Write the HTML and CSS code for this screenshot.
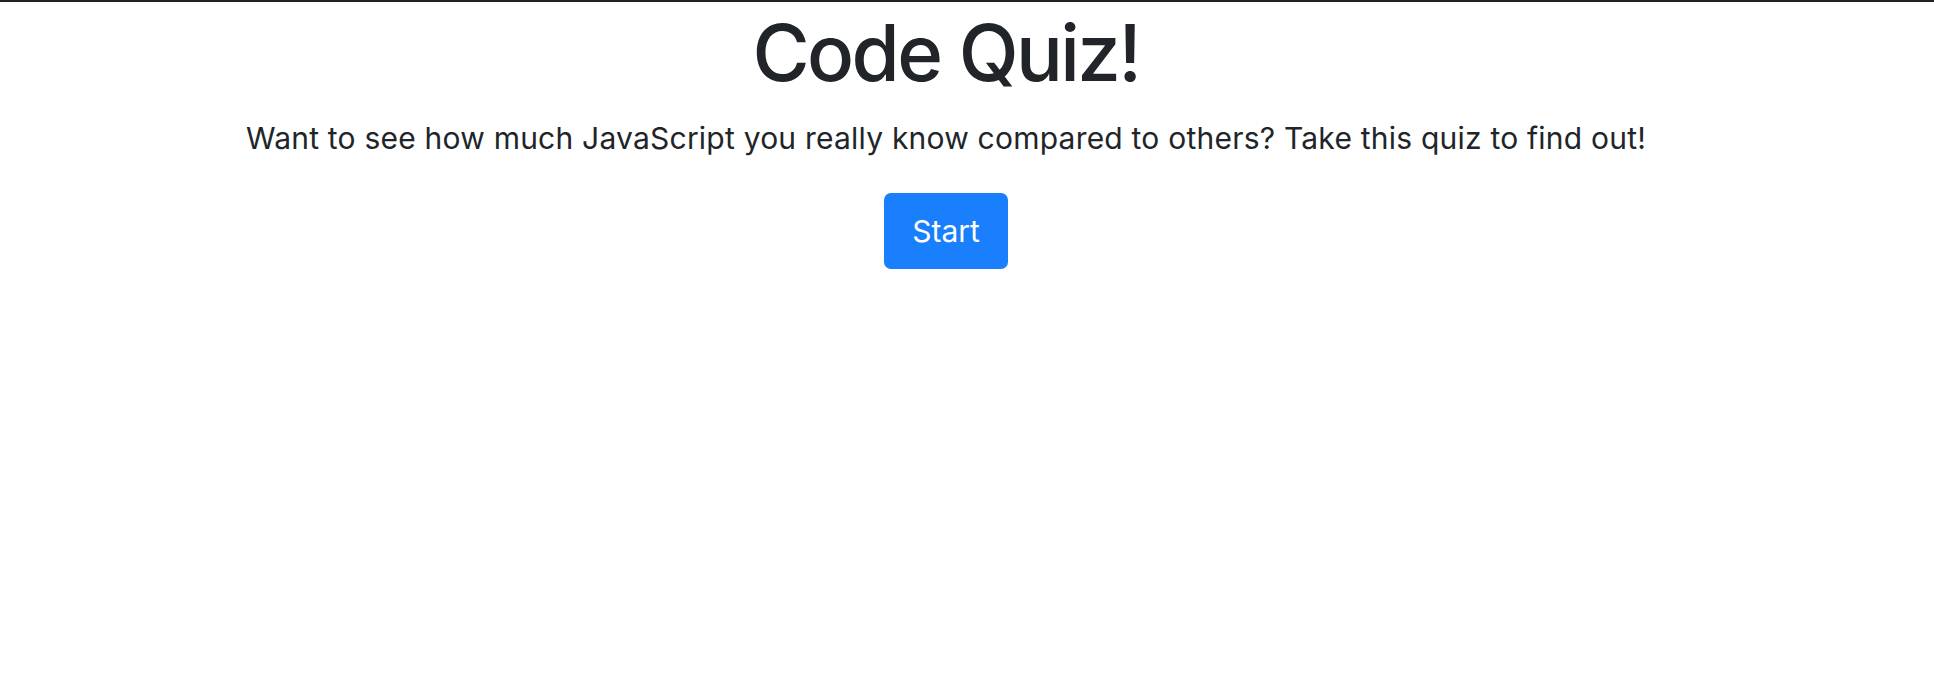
FILE: index.html
```html
<!DOCTYPE html>
<html lang="en">
<head>
<meta charset="utf-8">
<title>Code Quiz</title>
<link rel="stylesheet" href="styles.css">
</head>
<body>
<div class="topbar"></div>
<main class="intro">
  <h1 class="title">Code Quiz!</h1>
  <p class="lead">Want to see how much JavaScript you really know compared to others? Take this quiz to find out!</p>
  <button class="btn-start" type="button">Start</button>
</main>
</body>
</html>
```

FILE: styles.css
```css
html, body {
  margin: 0;
  padding: 0;
  background: #ffffff;
}
body {
  font-family: Inter, "Noto Sans", "Liberation Sans", sans-serif;
  color: #212529;
}
.topbar {
  height: 2px;
  background: #222222;
}
.intro {
  display: flex;
  flex-direction: column;
  align-items: center;
  padding-top: 4px;
  padding-right: 42px;
}
.title {
  margin: 0;
  font-size: 78px;
  font-weight: 500;
  line-height: 1.2;
  letter-spacing: -2.6px;
}
.lead {
  margin: 16px 0 0;
  font-size: 30px;
  font-weight: 400;
  line-height: 1.5;
  letter-spacing: 0.22px;
}
.btn-start {
  margin-top: 32px;
  width: 124px;
  height: 76px;
  border: none;
  border-radius: 7px;
  background: #1a7ffc;
  color: #ffffff;
  font-family: inherit;
  font-size: 30px;
  font-weight: 400;
  cursor: pointer;
}
```
